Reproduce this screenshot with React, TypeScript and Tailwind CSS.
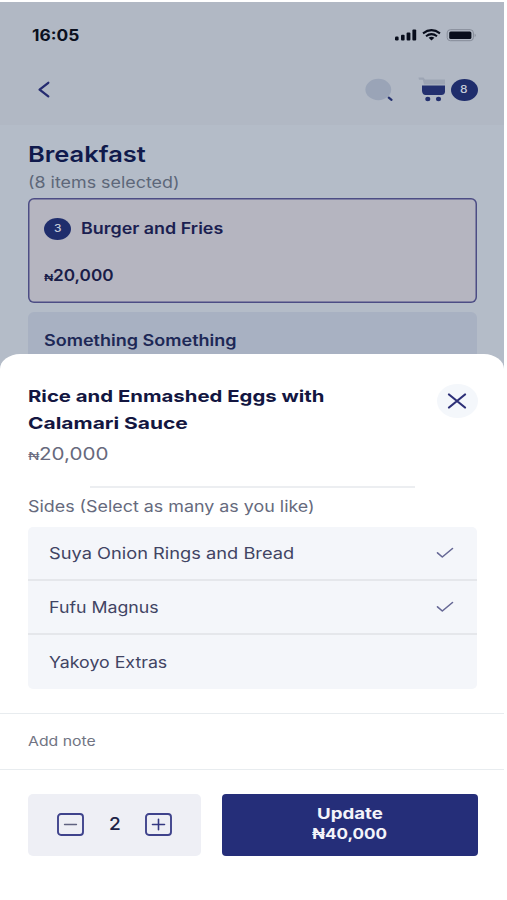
import { useLayoutEffect, useRef, useState } from "react";
import type { ReactNode } from "react";

// Stretches a single line of text so that it fills the width of its box.
function Wide({ className, children }: { className: string; children: ReactNode }) {
  const box = useRef<HTMLSpanElement>(null);
  const text = useRef<HTMLSpanElement>(null);
  const [scale, setScale] = useState(1);
  useLayoutEffect(() => {
    if (box.current && text.current) {
      setScale(box.current.offsetWidth / text.current.offsetWidth);
    }
  }, []);
  return (
    <span ref={box} className={`block shrink-0 whitespace-nowrap ${className}`}>
      <span ref={text} className="inline-block origin-left" style={{ transform: `scaleX(${scale})` }}>
        {children}
      </span>
    </span>
  );
}

function StatusIcons() {
  return (
    <svg className="h-4 w-[84px]" viewBox="0 0 84 16" fill="#080d1c">
      <rect x="1" y="9.5" width="3.6" height="4" rx="1.2" />
      <rect x="7" y="7.8" width="3.6" height="5.7" rx="1" />
      <rect x="12.6" y="5.5" width="3.8" height="8" rx="1" />
      <rect x="18.4" y="2.5" width="3.8" height="11" rx="1" />
      <g fill="none" stroke="#080d1c" strokeWidth="2">
        <path d="M29 6.4Q37.500 -0.100 46 6.400" />
        <path d="M32 9.300Q37.500 5 43 9.300" />
      </g>
      <path d="M34.600 10.800Q37.500 8.900 40.400 10.800L37.500 13.500Z" />
      <rect x="53.200" y="2.700" width="26.200" height="11" rx="3.200" fill="none" stroke="#858b98" strokeWidth="1" />
      <rect x="55.200" y="4.400" width="22.200" height="7.600" rx="1.500" />
      <path d="M80.700 6.400Q82.800 8.200 80.700 10Z" fill="#858b98" />
    </svg>
  );
}

function CartIcon() {
  return (
    <svg className="h-[25px] w-[28px]" viewBox="0 0 28 25">
      <path d="M0.500 0.500H5.500L7 2.500H27V7.500H6L4.800 2.800H1Z" fill="#9da5b4" />
      <path d="M4 8.500H27V15Q26.500 18 23.500 18H7.500Q4.500 17.800 4 14Z" fill="#23306f" />
      <ellipse cx="9.800" cy="22" rx="2.600" ry="2.200" fill="#23306f" />
      <ellipse cx="20.500" cy="22" rx="2.600" ry="2.200" fill="#23306f" />
    </svg>
  );
}

function Check() {
  return (
    <svg className="mr-[23px] h-[12px] w-[18px]" viewBox="0 0 18 12" fill="none" stroke="#666895" strokeWidth="1.600">
      <path d="M1.500 5.800L6.300 10L16.500 1.500" strokeLinecap="round" strokeLinejoin="round" />
    </svg>
  );
}

function StepButton({ plus }: { plus?: boolean }) {
  return (
    <button className="h-[23px] w-[27px]">
      <svg className="h-[23px] w-[27px]" viewBox="0 0 27 23" fill="none">
        <rect x="1" y="1" width="25" height="21" rx="3" stroke="#3f438c" strokeWidth="1.900" />
        {plus ? (
          <path d="M7.500 11.500H19.500M13.500 6.200V16.800" stroke="#343881" strokeWidth="1.600" strokeLinecap="round" />
        ) : (
          <path d="M7.500 11.500H19.500" stroke="#5f6280" strokeWidth="1.300" strokeLinecap="round" />
        )}
      </svg>
    </button>
  );
}

function CountBadge({ count }: { count: number }) {
  return (
    <span className="flex h-[22px] w-[27px] items-center justify-center rounded-[50%] bg-[#1f2d6c] text-[10.500px] font-medium text-[#c3cad8]">
      <Wide className="w-[8px] leading-4">{count}</Wide>
    </span>
  );
}

const rows = [
  { label: "Suya Onion Rings and Bread", width: "w-[245px]", checked: true },
  { label: "Fufu Magnus", width: "w-[110px]", checked: true },
  { label: "Yakoyo Extras", width: "w-[118px]", checked: false },
];

export default function App() {
  return (
    <div className="h-[900px] w-[507px] overflow-hidden bg-white pt-[2px] font-['Inter','Noto_Sans',sans-serif]">
      <div className="w-[504px]">
        <div className="h-[368px] overflow-hidden bg-[#b4bcc8]">
          <header className="h-[123px] bg-[#b1b8c4]">
            <div className="flex h-[66px] items-center justify-between pl-[32px] pr-[26px]">
              <Wide className="w-[47px] pt-[1px] text-[15.500px] font-bold leading-5 text-[#0b101e]">16:05</Wide>
              <StatusIcons />
            </div>
            <div className="flex h-[43px] items-center pl-[37px] pr-[26.500px]">
              <svg className="h-[17px] w-[13px]" viewBox="0 0 13 17" fill="none" stroke="#252b70" strokeWidth="2.300">
                <path d="M11.300 1.800L2.600 8.700L11.300 15.300" strokeLinecap="round" strokeLinejoin="round" />
              </svg>
              <svg className="ml-auto h-[24px] w-[28px]" viewBox="0 0 28 24">
                <ellipse cx="13.300" cy="11.500" rx="12.900" ry="10.700" fill="#9aa4b7" />
                <path d="M23.800 19.700L26.500 21.900" stroke="#23306f" strokeWidth="2.200" strokeLinecap="round" />
              </svg>
              <div className="ml-[25px] mr-[4.500px] flex">
                <CartIcon />
              </div>
              <CountBadge count={8} />
            </div>
          </header>
          <main className="px-[28px] pt-[14px]">
            <Wide className="w-[118px] text-[22px] font-semibold leading-[30px] text-[#101a4c]">Breakfast</Wide>
            <Wide className="w-[151px] pt-[4px] text-[15.500px] leading-5 text-[#5d6779]">(8 items selected)</Wide>
            <section className="mt-[5px] h-[105px] w-[449px] rounded-[6px] bg-[#b5b5c0] pl-[16px] pt-[20px] shadow-[inset_0_0_0_1.500px_#4c4d85]">
              <div className="flex h-[22px] items-center">
                <CountBadge count={3} />
                <Wide className="ml-[10px] w-[142px] text-[15.500px] font-semibold leading-5 text-[#1b1f51]">
                  Burger and Fries
                </Wide>
              </div>
              <div className="mt-[26px] flex h-5 items-center font-semibold leading-5 text-[#191d48]">
                <Wide className="w-[9px] pt-[3px] text-[9.500px]">₦</Wide>
                <Wide className="w-[61px] text-[15.500px]">20,000</Wide>
              </div>
            </section>
            <section className="mt-[9px] h-[80px] w-[449px] rounded-[6px] bg-[#a8b1c2] pl-[16px] pt-[19px]">
              <Wide className="w-[193px] text-[15.500px] font-semibold leading-5 text-[#1d2856]">
                Something Something
              </Wide>
            </section>
          </main>
        </div>
        <div className="relative -mt-[16.500px] h-[547px] rounded-t-[20px_15px] bg-white pt-[29.500px]">
          <div className="flex justify-between pl-[28px] pr-[26.500px]">
            <div>
              <Wide className="w-[296px] text-[16.500px] font-bold leading-[26.500px] text-[#131641]">
                Rice and Enmashed Eggs with
              </Wide>
              <Wide className="w-[160px] text-[16.500px] font-bold leading-[26.500px] text-[#131641]">
                Calamari Sauce
              </Wide>
              <div className="mt-[6px] flex h-6 items-center leading-6 text-[#67697d]">
                <Wide className="w-[11px] pt-[3px] text-[11px]">₦</Wide>
                <Wide className="w-[69px] text-[17px]">20,000</Wide>
              </div>
            </div>
            <button className="mt-[1px] flex h-[34px] w-[41px] items-center justify-center rounded-[50%] bg-[#f4f7fb]">
              <svg className="h-[16px] w-[20px]" viewBox="0 0 20 16" fill="none" stroke="#2d3078" strokeWidth="2.200">
                <path d="M2 1.500L18 14.500M18 1.500L2 14.500" strokeLinecap="round" />
              </svg>
            </button>
          </div>
          <div className="ml-[90px] mt-[20px] h-[1.500px] w-[325px] bg-[#eceef1]" />
          <Wide className="ml-[28px] mt-[9.500px] w-[287px] text-[15.500px] leading-5 text-[#666a7d]">
            Sides (Select as many as you like)
          </Wide>
          <ul className="ml-[28px] mt-[10px] h-[162px] w-[449px] divide-y-2 divide-[#e5e7eb] overflow-hidden rounded-[5px] bg-[#f4f6fa]">
            {rows.map((row) => (
              <li key={row.label} className="flex h-[54px] items-center justify-between pl-[21px]">
                <Wide className={`pt-[1px] text-[15.500px] leading-5 text-[#414463] ${row.width}`}>{row.label}</Wide>
                {row.checked && <Check />}
              </li>
            ))}
          </ul>
          <div className="mt-[24px] flex h-[57px] items-center border-y border-[#e8ecef] pb-[2px] pl-[28px]">
            <Wide className="w-[68px] text-[13px] leading-4 text-[#717483]">Add note</Wide>
          </div>
          <div className="mt-[23.500px] flex pl-[28px]">
            <div className="flex h-[62px] w-[173px] items-center rounded-[5px] bg-[#eeeff5] pl-[29px]">
              <StepButton />
              <Wide className="ml-[25px] mr-[24px] w-[12px] pb-[2px] text-[17.500px] font-medium leading-6 text-[#202348]">2</Wide>
              <StepButton plus />
            </div>
            <button className="ml-[21px] flex h-[62px] w-[255.500px] flex-col items-center rounded-[4px] bg-[#252e79] pt-[10px] font-bold text-[#f3f4fa]">
              <Wide className="w-[66px] text-left text-[15px] leading-[20.500px]">Update</Wide>
              <Wide className="w-[75px] text-left text-[15px] leading-[20.500px]">₦40,000</Wide>
            </button>
          </div>
        </div>
      </div>
    </div>
  );
}
